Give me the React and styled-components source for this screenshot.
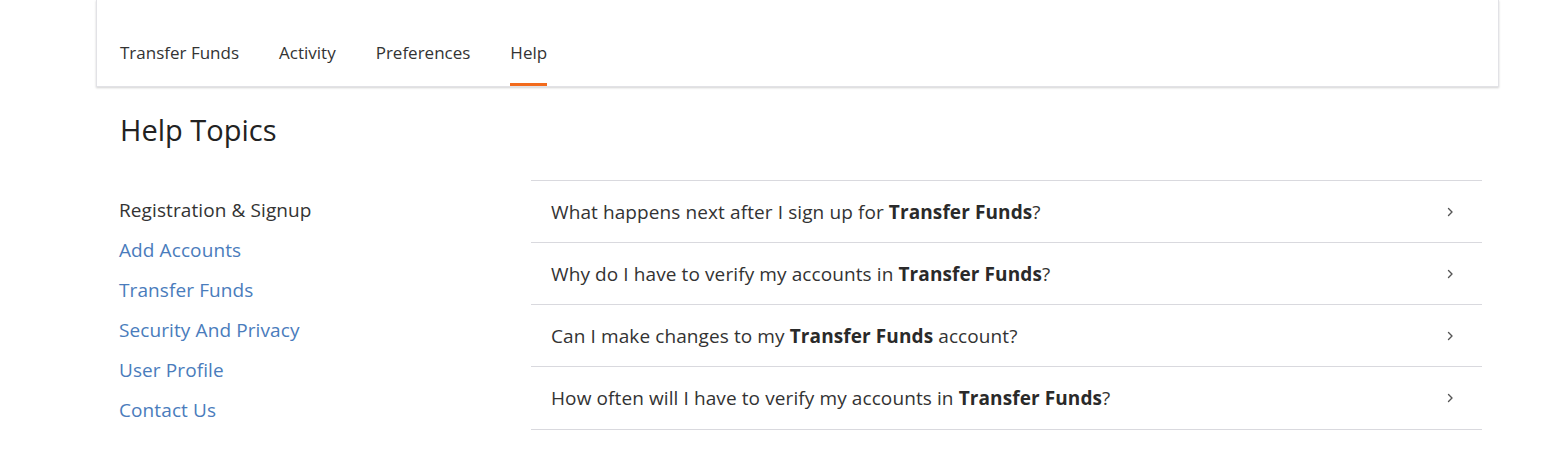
import React from "react";
import styled, { createGlobalStyle } from "styled-components";

const Global = createGlobalStyle`
  html, body { margin: 0; padding: 0; background: #fff; }
  body { font-family: "Open Sans", "Noto Sans", sans-serif; color: #333; }
  * { box-sizing: border-box; }
`;

const Page = styled.div`
  margin-left: 96px;
  width: 1403px;
`;

const HeaderCard = styled.header`
  height: 87px;
  background: #fff;
  border: 1px solid #e2e2e6;
  border-top: none;
  box-shadow: 0 1px 2px rgba(0, 0, 0, 0.18);
  padding-left: 23px;
  display: flex;
`;

const Nav = styled.nav`
  display: flex;
  gap: 40px;
  height: 86px;
`;

const NavItem = styled.a`
  display: block;
  font-size: 17px;
  line-height: 22px;
  padding-top: 42px;
  padding-bottom: 19px;
  height: 86px;
  color: #333;
  text-decoration: none;
  border-bottom: 3px solid ${(p) => (p.$active ? "#f26b1d" : "transparent")};
  cursor: pointer;
`;

const Content = styled.main`
  padding-left: 23px;
  padding-right: 17px;
`;

const Title = styled.h1`
  margin: 23px 0 0;
  padding-left: 1px;
  font-size: 29px;
  line-height: 40px;
  font-weight: 400;
  color: #222;
`;

const Columns = styled.div`
  margin-top: 30px;
  display: grid;
  grid-template-columns: 412px 1fr;
`;

const TopicList = styled.ul`
  list-style: none;
  margin: 0;
  padding: 10px 0 0;
`;

const Topic = styled.li`
  font-size: 19px;
  letter-spacing: 0.1px;
  line-height: 40px;
  height: 40px;
  color: ${(p) => (p.$current ? "#333" : "#4a7cbc")};
  cursor: pointer;
`;

const QuestionList = styled.div`
  border-bottom: 1px solid #d9d9de;
`;

const Question = styled.div`
  height: 62px;
  border-top: 1px solid #d9d9de;
  display: flex;
  align-items: center;
  justify-content: space-between;
  padding: 0 28px 0 20px;
  font-size: 19px;
  letter-spacing: 0.1px;
  color: #333;
  cursor: pointer;

  b {
    font-weight: 700;
    color: #2a2a2a;
  }
`;

const Chevron = () => (
  <svg width="7" height="10" viewBox="0 0 7 10" fill="none">
    <path d="M1.5 1.5 L5 5 L1.5 8.5" stroke="#555" strokeWidth="1.4" strokeLinecap="round" strokeLinejoin="round" />
  </svg>
);

const topics = [
  "Registration & Signup",
  "Add Accounts",
  "Transfer Funds",
  "Security And Privacy",
  "User Profile",
  "Contact Us",
];

const questions = [
  ["What happens next after I sign up for ", "Transfer Funds", "?"],
  ["Why do I have to verify my accounts in ", "Transfer Funds", "?"],
  ["Can I make changes to my ", "Transfer Funds", " account?"],
  ["How often will I have to verify my accounts in ", "Transfer Funds", "?"],
];

export default function App() {
  return (
    <>
      <Global />
      <Page>
        <HeaderCard>
          <Nav>
            <NavItem>Transfer Funds</NavItem>
            <NavItem>Activity</NavItem>
            <NavItem>Preferences</NavItem>
            <NavItem $active>Help</NavItem>
          </Nav>
        </HeaderCard>
        <Content>
          <Title>Help Topics</Title>
          <Columns>
            <TopicList>
              {topics.map((t, i) => (
                <Topic key={t} $current={i === 0}>
                  {t}
                </Topic>
              ))}
            </TopicList>
            <QuestionList>
              {questions.map(([a, b, c]) => (
                <Question key={a}>
                  <span>
                    {a}
                    <b>{b}</b>
                    {c}
                  </span>
                  <Chevron />
                </Question>
              ))}
            </QuestionList>
          </Columns>
        </Content>
      </Page>
    </>
  );
}
